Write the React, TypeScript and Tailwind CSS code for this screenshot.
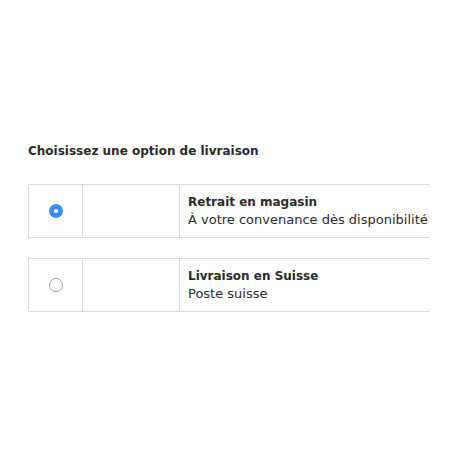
const options = [
  { title: "Retrait en magasin", sub: "À votre convenance dès disponibilité", checked: true },
  { title: "Livraison en Suisse", sub: "Poste suisse", checked: false },
];

function Radio({ checked }: { checked: boolean }) {
  if (checked) {
    return (
      <span className="flex h-[14px] w-[14px] items-center justify-center rounded-full bg-[#3d8ef5]">
        <span className="h-[4px] w-[4px] rounded-full bg-white" />
      </span>
    );
  }
  return <span className="block h-[14px] w-[14px] rounded-full border border-[#a0a0a0] bg-white" />;
}

export default function App() {
  return (
    <div className="h-[458px] w-[458px] bg-white pl-[28px] pt-[142px] text-[#2b2b2b] [font-family:'DejaVu_Sans',sans-serif]">
      <h2 className="text-[12px] font-bold leading-[18px]">Choisissez une option de livraison</h2>
      <div className="mt-[24px] flex w-[402px] flex-col gap-[20px] overflow-hidden">
        {options.map((o) => (
          <div key={o.title} className="flex h-[54px] w-[460px] border border-[#dcdcdc]">
            <div className="flex w-[54px] items-center justify-center border-r border-[#dcdcdc]">
              <Radio checked={o.checked} />
            </div>
            <div className="w-[97px] border-r border-[#dcdcdc]" />
            <div className="flex flex-col justify-center pl-[8px] leading-[18px]">
              <span className="text-[12px] font-bold">{o.title}</span>
              <span className="text-[13px]">{o.sub}</span>
            </div>
          </div>
        ))}
      </div>
    </div>
  );
}
